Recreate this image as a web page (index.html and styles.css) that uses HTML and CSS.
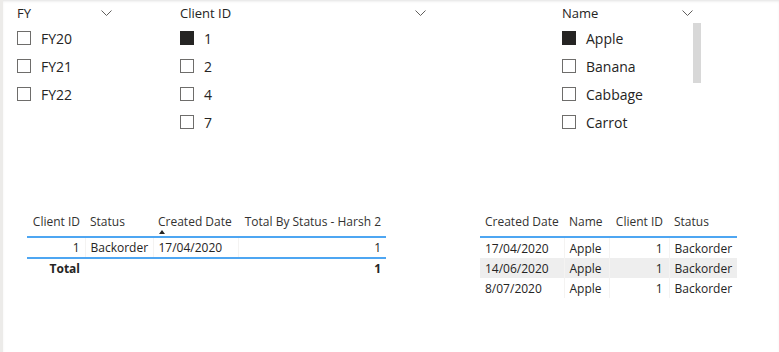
FILE: index.html
```html
<!DOCTYPE html>
<html lang="en">
<head>
<meta charset="utf-8">
<title>Report</title>
<link rel="stylesheet" href="styles.css">
</head>
<body>
<div class="page">
  <section class="slicers">
    <div class="slicer slicer-fy">
      <div class="slicer-head"><span>FY</span><svg class="chev" width="11" height="6" viewBox="0 0 11 6"><polyline points="0.5,0.5 5.5,5.5 10.5,0.5" fill="none" stroke="#605e5c" stroke-width="1"/></svg></div>
      <ul class="slicer-list">
        <li><span class="box"></span>FY20</li>
        <li><span class="box"></span>FY21</li>
        <li><span class="box"></span>FY22</li>
      </ul>
    </div>
    <div class="slicer slicer-client">
      <div class="slicer-head"><span>Client ID</span><svg class="chev" width="11" height="6" viewBox="0 0 11 6"><polyline points="0.5,0.5 5.5,5.5 10.5,0.5" fill="none" stroke="#605e5c" stroke-width="1"/></svg></div>
      <ul class="slicer-list">
        <li><span class="box on"></span>1</li>
        <li><span class="box"></span>2</li>
        <li><span class="box"></span>4</li>
        <li><span class="box"></span>7</li>
      </ul>
    </div>
    <div class="slicer slicer-name">
      <div class="slicer-head"><span>Name</span><svg class="chev" width="11" height="6" viewBox="0 0 11 6"><polyline points="0.5,0.5 5.5,5.5 10.5,0.5" fill="none" stroke="#605e5c" stroke-width="1"/></svg></div>
      <div class="slicer-body">
        <ul class="slicer-list">
          <li><span class="box on"></span>Apple</li>
          <li><span class="box"></span>Banana</li>
          <li><span class="box"></span>Cabbage</li>
          <li><span class="box"></span>Carrot</li>
        </ul>
        <div class="scroll"><div class="thumb"></div></div>
      </div>
    </div>
  </section>

  <section class="tables">
    <table class="grid grid-left">
      <colgroup><col class="c58"><col class="c68"><col class="c85"><col class="c148"></colgroup>
      <thead>
        <tr>
          <th class="num">Client ID</th>
          <th>Status</th>
          <th>Created Date<span class="sort"></span></th>
          <th class="num">Total By Status - Harsh 2</th>
        </tr>
      </thead>
      <tbody>
        <tr class="row">
          <td class="num">1</td>
          <td class="sep">Backorder</td>
          <td class="sep">17/04/2020</td>
          <td class="num sep">1</td>
        </tr>
        <tr class="total">
          <td class="num">Total</td>
          <td></td>
          <td></td>
          <td class="num">1</td>
        </tr>
      </tbody>
    </table>

    <table class="grid grid-right">
      <colgroup><col class="c84"><col class="c45"><col class="c60"><col class="c68"></colgroup>
      <thead>
        <tr>
          <th>Created Date</th>
          <th>Name</th>
          <th class="num">Client ID</th>
          <th>Status</th>
        </tr>
      </thead>
      <tbody>
        <tr>
          <td>17/04/2020</td>
          <td class="sep">Apple</td>
          <td class="num sep">1</td>
          <td class="sep">Backorder</td>
        </tr>
        <tr class="alt">
          <td>14/06/2020</td>
          <td class="sep">Apple</td>
          <td class="num sep">1</td>
          <td class="sep">Backorder</td>
        </tr>
        <tr>
          <td>8/07/2020</td>
          <td class="sep">Apple</td>
          <td class="num sep">1</td>
          <td class="sep">Backorder</td>
        </tr>
      </tbody>
    </table>
  </section>
</div>
</body>
</html>
```

FILE: styles.css
```css
* { box-sizing: border-box; }

html, body {
  margin: 0;
  background: #ffffff;
}

body {
  font-family: "Open Sans", "Noto Sans", sans-serif;
  color: #252423;
}

.page {
  height: 352px;
  border-left: 3px solid #ecebe9;
  box-shadow: inset 0 2px 3px -1px rgba(0, 0, 0, 0.12);
  padding-top: 3px;
}

/* ---------- slicers ---------- */
.slicers {
  display: grid;
  grid-template-columns: 163px 382px 139px;
  padding-left: 14px;
}

.slicer-head {
  display: flex;
  justify-content: space-between;
  align-items: center;
  height: 20px;
  font-size: 13px;
  line-height: 20px;
  color: #252423;
}

.slicer-fy .slicer-head { width: 95px; }
.slicer-client .slicer-head { width: 246px; }
.slicer-name .slicer-head { width: 131px; }

.chev { display: block; }

.slicer-list {
  list-style: none;
  margin: 1px 0 0;
  padding: 0;
}

.slicer-list li {
  display: flex;
  align-items: center;
  gap: 10px;
  height: 28px;
  font-size: 14px;
  color: #252423;
}

.box {
  width: 14px;
  height: 14px;
  border: 1px solid #6e6d6b;
  background: #ffffff;
  flex: none;
  margin-top: -1px;
}

.box.on {
  background: #252423;
  border-color: #252423;
}

.slicer-body {
  display: flex;
}

.slicer-body .slicer-list {
  width: 131px;
}

.scroll {
  width: 8px;
}

.thumb {
  width: 8px;
  height: 60px;
  background: #d8d8d8;
}

/* ---------- tables ---------- */
.tables {
  display: flex;
  align-items: flex-start;
  gap: 94px;
  padding-left: 24px;
  margin-top: 75px;
}

.grid {
  border-collapse: collapse;
  table-layout: fixed;
  font-size: 12px;
  color: #252423;
}

.grid-left { width: 359px; }
.grid-right { width: 257px; }

.c58 { width: 58px; }
.c68 { width: 68px; }
.c85 { width: 85px; }
.c148 { width: 148px; }
.c84 { width: 84px; }
.c45 { width: 45px; }
.c60 { width: 60px; }

.grid th {
  font-weight: normal;
  text-align: left;
  vertical-align: top;
  height: 26px;
  padding: 2px 5px 0 5px;
  line-height: 18px;
  white-space: nowrap;
  border-bottom: 2px solid #4ea6f2;
  color: #333231;
}

.grid td {
  padding: 1px 5px 0 5px;
  white-space: nowrap;
  line-height: 18px;
}

.grid .num { text-align: right; }

.grid .sep { border-left: 1px solid #f4f3f2; }

.sort {
  display: block;
  width: 0;
  height: 0;
  margin: -1px 0 0 1px;
  border-left: 3.5px solid transparent;
  border-right: 3.5px solid transparent;
  border-bottom: 4px solid #252423;
}

.grid-left .row td {
  height: 19px;
  border-bottom: 2px solid #4ea6f2;
}

.grid-left .total td {
  height: 19px;
  font-weight: bold;
}

.grid-right th { padding: 2px 6px 0 5px; }
.grid-right td {
  height: 19.5px;
  padding: 2px 6px 0 5px;
}

.grid-right .alt td { background: #eeeeee; }
```
